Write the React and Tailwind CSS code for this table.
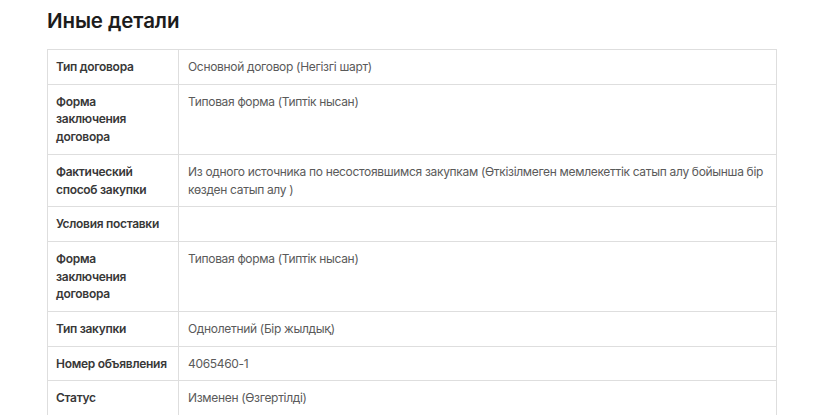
const rows = [
  { label: 'Тип договора', value: 'Основной договор (Негізгі шарт)' },
  { label: 'Форма\nзаключения\nдоговора', value: 'Типовая форма (Типтік нысан)' },
  {
    label: 'Фактический способ закупки',
    value:
      'Из одного источника по несостоявшимся закупкам (Өткізілмеген мемлекеттік сатып алу бойынша бір көзден сатып алу )',
  },
  { label: 'Условия поставки', value: '' },
  { label: 'Форма\nзаключения\nдоговора', value: 'Типовая форма (Типтік нысан)' },
  { label: 'Тип закупки', value: 'Однолетний (Бір жылдық)' },
  { label: 'Номер объявления', value: '4065460-1' },
  { label: 'Статус', value: 'Изменен (Өзгертілді)' },
];

export default function App() {
  return (
    <div className="min-h-screen bg-white px-[47px] pt-[7px] font-['Inter',sans-serif]">
      <h2 className="mb-[14px] text-[20.5px] font-semibold leading-7 tracking-[-0.1px] text-[#1c1c1c]">
        Иные детали
      </h2>
      <table className="w-full border-collapse border border-[#dedede] text-[12px] leading-[17.7px]">
        <tbody>
          {rows.map((row, i) => (
            <tr key={i} className="border-b border-[#dedede]">
              <td className="w-[131px] whitespace-pre-line border-r border-[#dedede] px-2 py-2 align-top font-semibold tracking-[-0.3px] text-[#383838]">
                {row.label}
              </td>
              <td className="px-[9px] py-2 align-top tracking-[-0.32px] text-[#5a5a5a]">
                {row.value}
              </td>
            </tr>
          ))}
        </tbody>
      </table>
    </div>
  );
}
